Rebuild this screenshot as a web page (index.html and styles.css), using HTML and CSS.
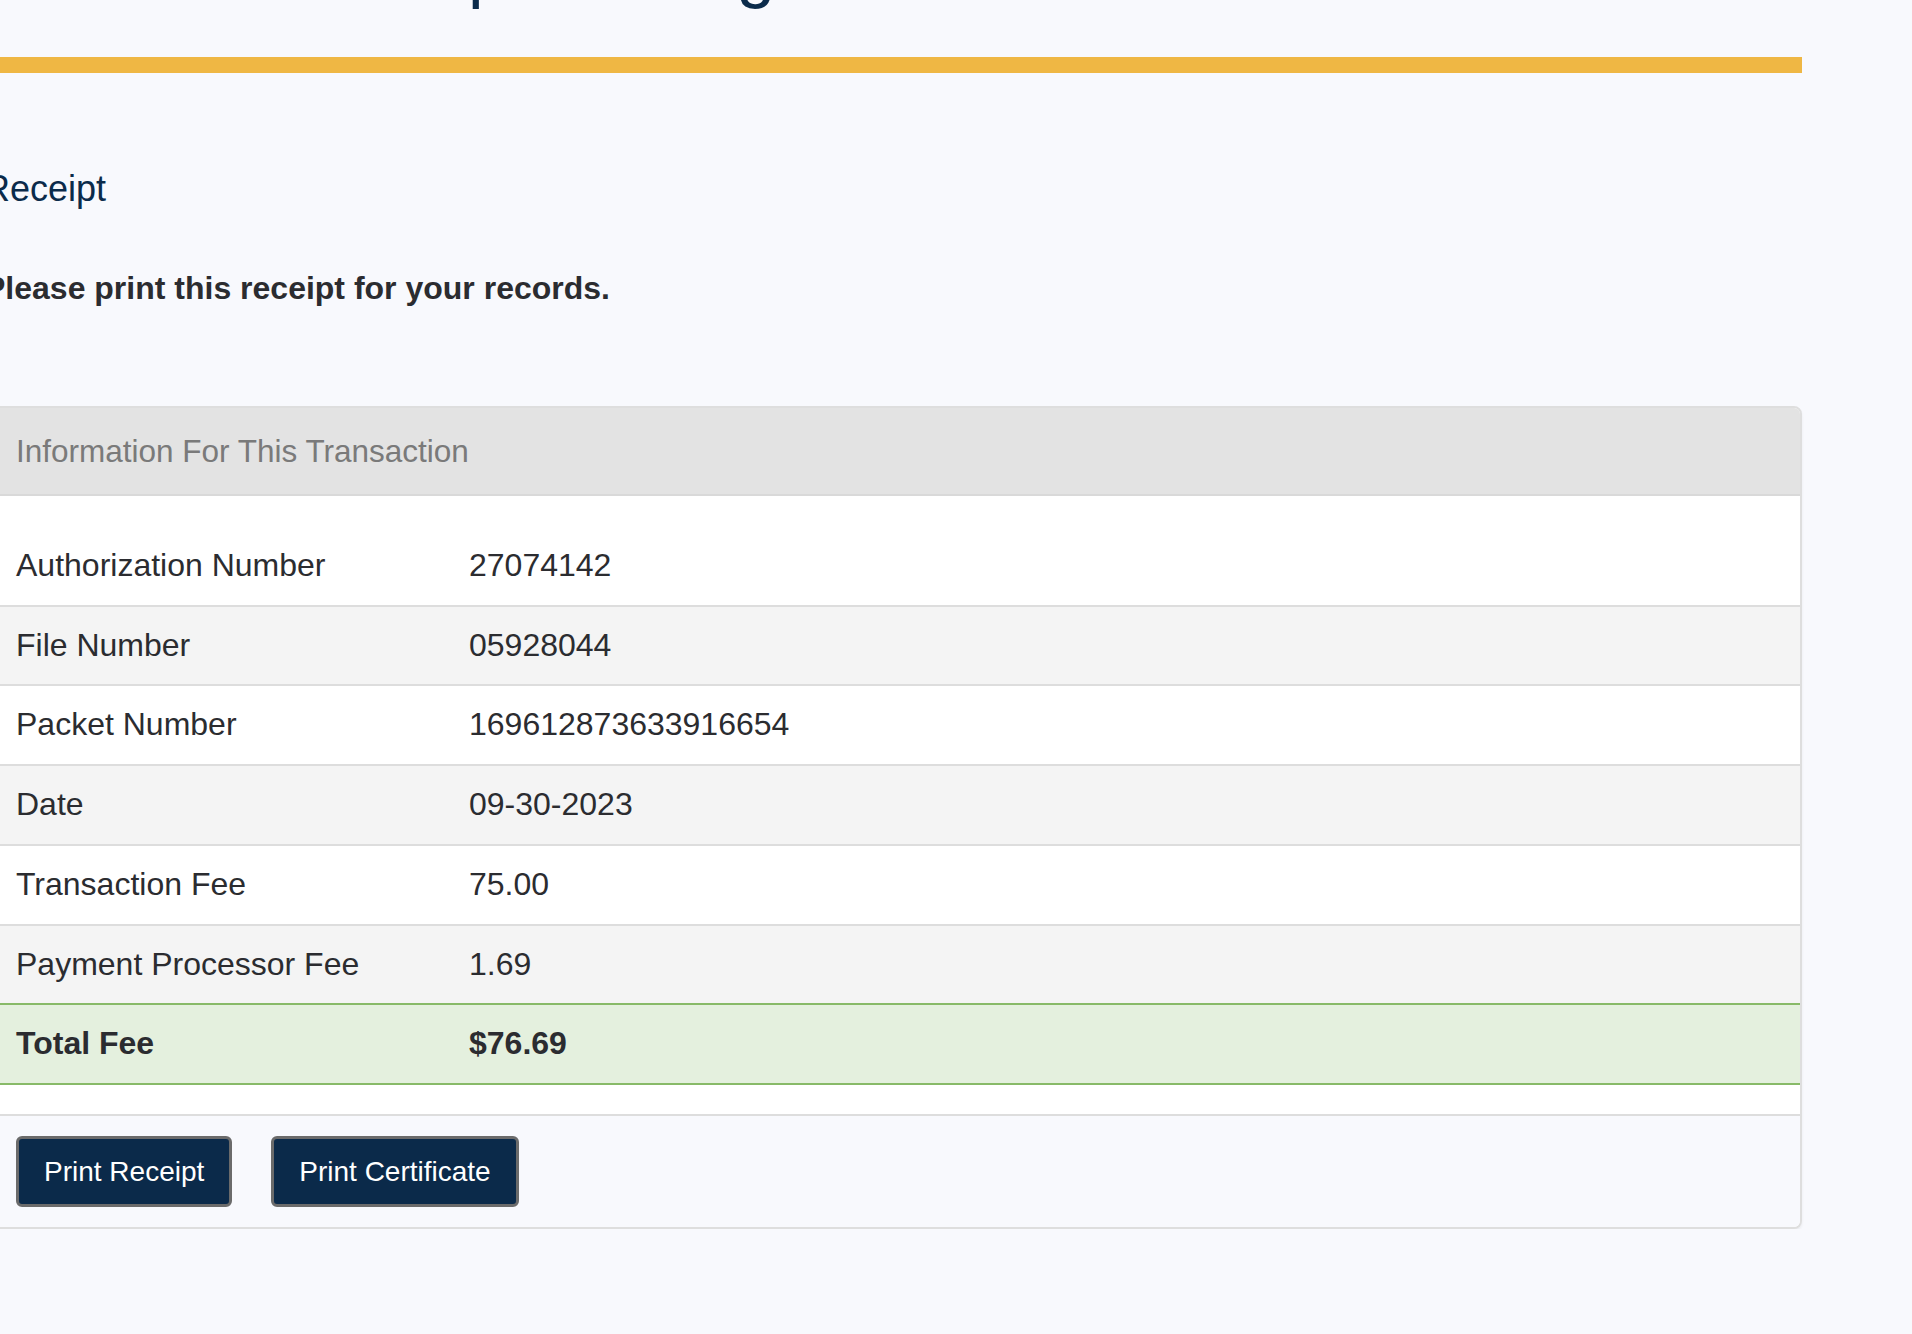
FILE: index.html
```html
<!DOCTYPE html>
<html lang="en">
<head>
<meta charset="utf-8">
<title>Receipt</title>
<link rel="stylesheet" href="styles.css">
</head>
<body>
<div class="page">
  <header class="masthead">
    <h1 class="site-title">Annual Report Filing</h1>
    <div class="accent-bar"></div>
  </header>

  <main class="content">
    <h2 class="page-title">Receipt</h2>
    <p class="notice">Please print this receipt for your records.</p>

    <section class="panel">
      <div class="panel-heading">Information For This Transaction</div>
      <div class="panel-body">
        <table class="info-table">
          <colgroup>
            <col class="col-label">
            <col class="col-value">
          </colgroup>
          <tbody>
            <tr class="first"><td>Authorization Number</td><td>27074142</td></tr>
            <tr class="striped"><td>File Number</td><td>05928044</td></tr>
            <tr><td>Packet Number</td><td>169612873633916654</td></tr>
            <tr class="striped"><td>Date</td><td>09-30-2023</td></tr>
            <tr><td>Transaction Fee</td><td>75.00</td></tr>
            <tr class="striped"><td>Payment Processor Fee</td><td>1.69</td></tr>
            <tr class="total"><td>Total Fee</td><td>$76.69</td></tr>
          </tbody>
        </table>
      </div>
      <div class="panel-footer">
        <button class="btn" type="button">Print Receipt</button>
        <button class="btn" type="button">Print Certificate</button>
      </div>
    </section>
  </main>
</div>
</body>
</html>
```

FILE: styles.css
```css
html, body {
  margin: 0;
  padding: 0;
  background: #f8f9fd;
}

body {
  font-family: "Liberation Sans", Arial, Helvetica, sans-serif;
  color: #2b2c30;
  overflow: hidden;
}

.page {
  display: flow-root;
  margin-left: -16px;
  width: 1818px;
}

.masthead {
  display: flow-root;
}

.site-title {
  margin: -65px 0 0 0;
  padding-left: 157px;
  height: 70px;
  font-size: 70px;
  line-height: 70px;
  font-weight: 300;
  color: #0b2b4b;
  white-space: nowrap;
}

.accent-bar {
  margin-top: 52px;
  height: 16px;
  background: #efb744;
}

.content {
  display: flow-root;
}

.page-title {
  margin: 96px 0 0 0;
  font-size: 36px;
  line-height: 40px;
  font-weight: 400;
  color: #0b2b4b;
}

.notice {
  margin: 56px 0 0 0;
  font-size: 32px;
  line-height: 46px;
  font-weight: 700;
  color: #2b2c30;
}

.panel {
  margin-top: 95px;
  border: 2px solid #dedede;
  border-radius: 8px;
  background: #ffffff;
  box-shadow: 0 2px 3px rgba(0, 0, 0, 0.06);
  overflow: hidden;
}

.panel-heading {
  padding: 20px 30px;
  background: #e3e3e3;
  border-bottom: 2px solid #d9d9d9;
  font-size: 31.5px;
  line-height: 46px;
  color: #7a7a7a;
}

.panel-body {
  padding: 31px 0 29px 0;
  background: #ffffff;
}

.info-table {
  width: 100%;
  border-collapse: separate;
  border-spacing: 0;
  table-layout: fixed;
  font-size: 32px;
  line-height: 1.42857;
}

.col-label {
  width: 467px;
}

.info-table td {
  padding: 16px 16px;
  border-top: 2px solid #dddddd;
  vertical-align: top;
  white-space: nowrap;
}

.info-table td:first-child {
  padding-left: 30px;
}

.info-table tr.first td {
  border-top: 0;
}

.info-table tr.striped td {
  background: #f4f4f4;
}

.info-table tr.total td {
  background: #e4f0de;
  border-top: 2px solid #88ba68;
  border-bottom: 2px solid #88ba68;
  font-weight: 700;
}

.panel-footer {
  display: flex;
  gap: 39px;
  padding: 20px 30px;
  background: #f8f9fd;
  border-top: 2px solid #dddddd;
}

.btn {
  font-family: "Liberation Sans", Arial, Helvetica, sans-serif;
  font-size: 28px;
  line-height: 41px;
  padding: 12px 25px;
  color: #ffffff;
  background: #0b2a4a;
  border: 3px solid #6b6b6b;
  border-radius: 6px;
  cursor: pointer;
}
```
